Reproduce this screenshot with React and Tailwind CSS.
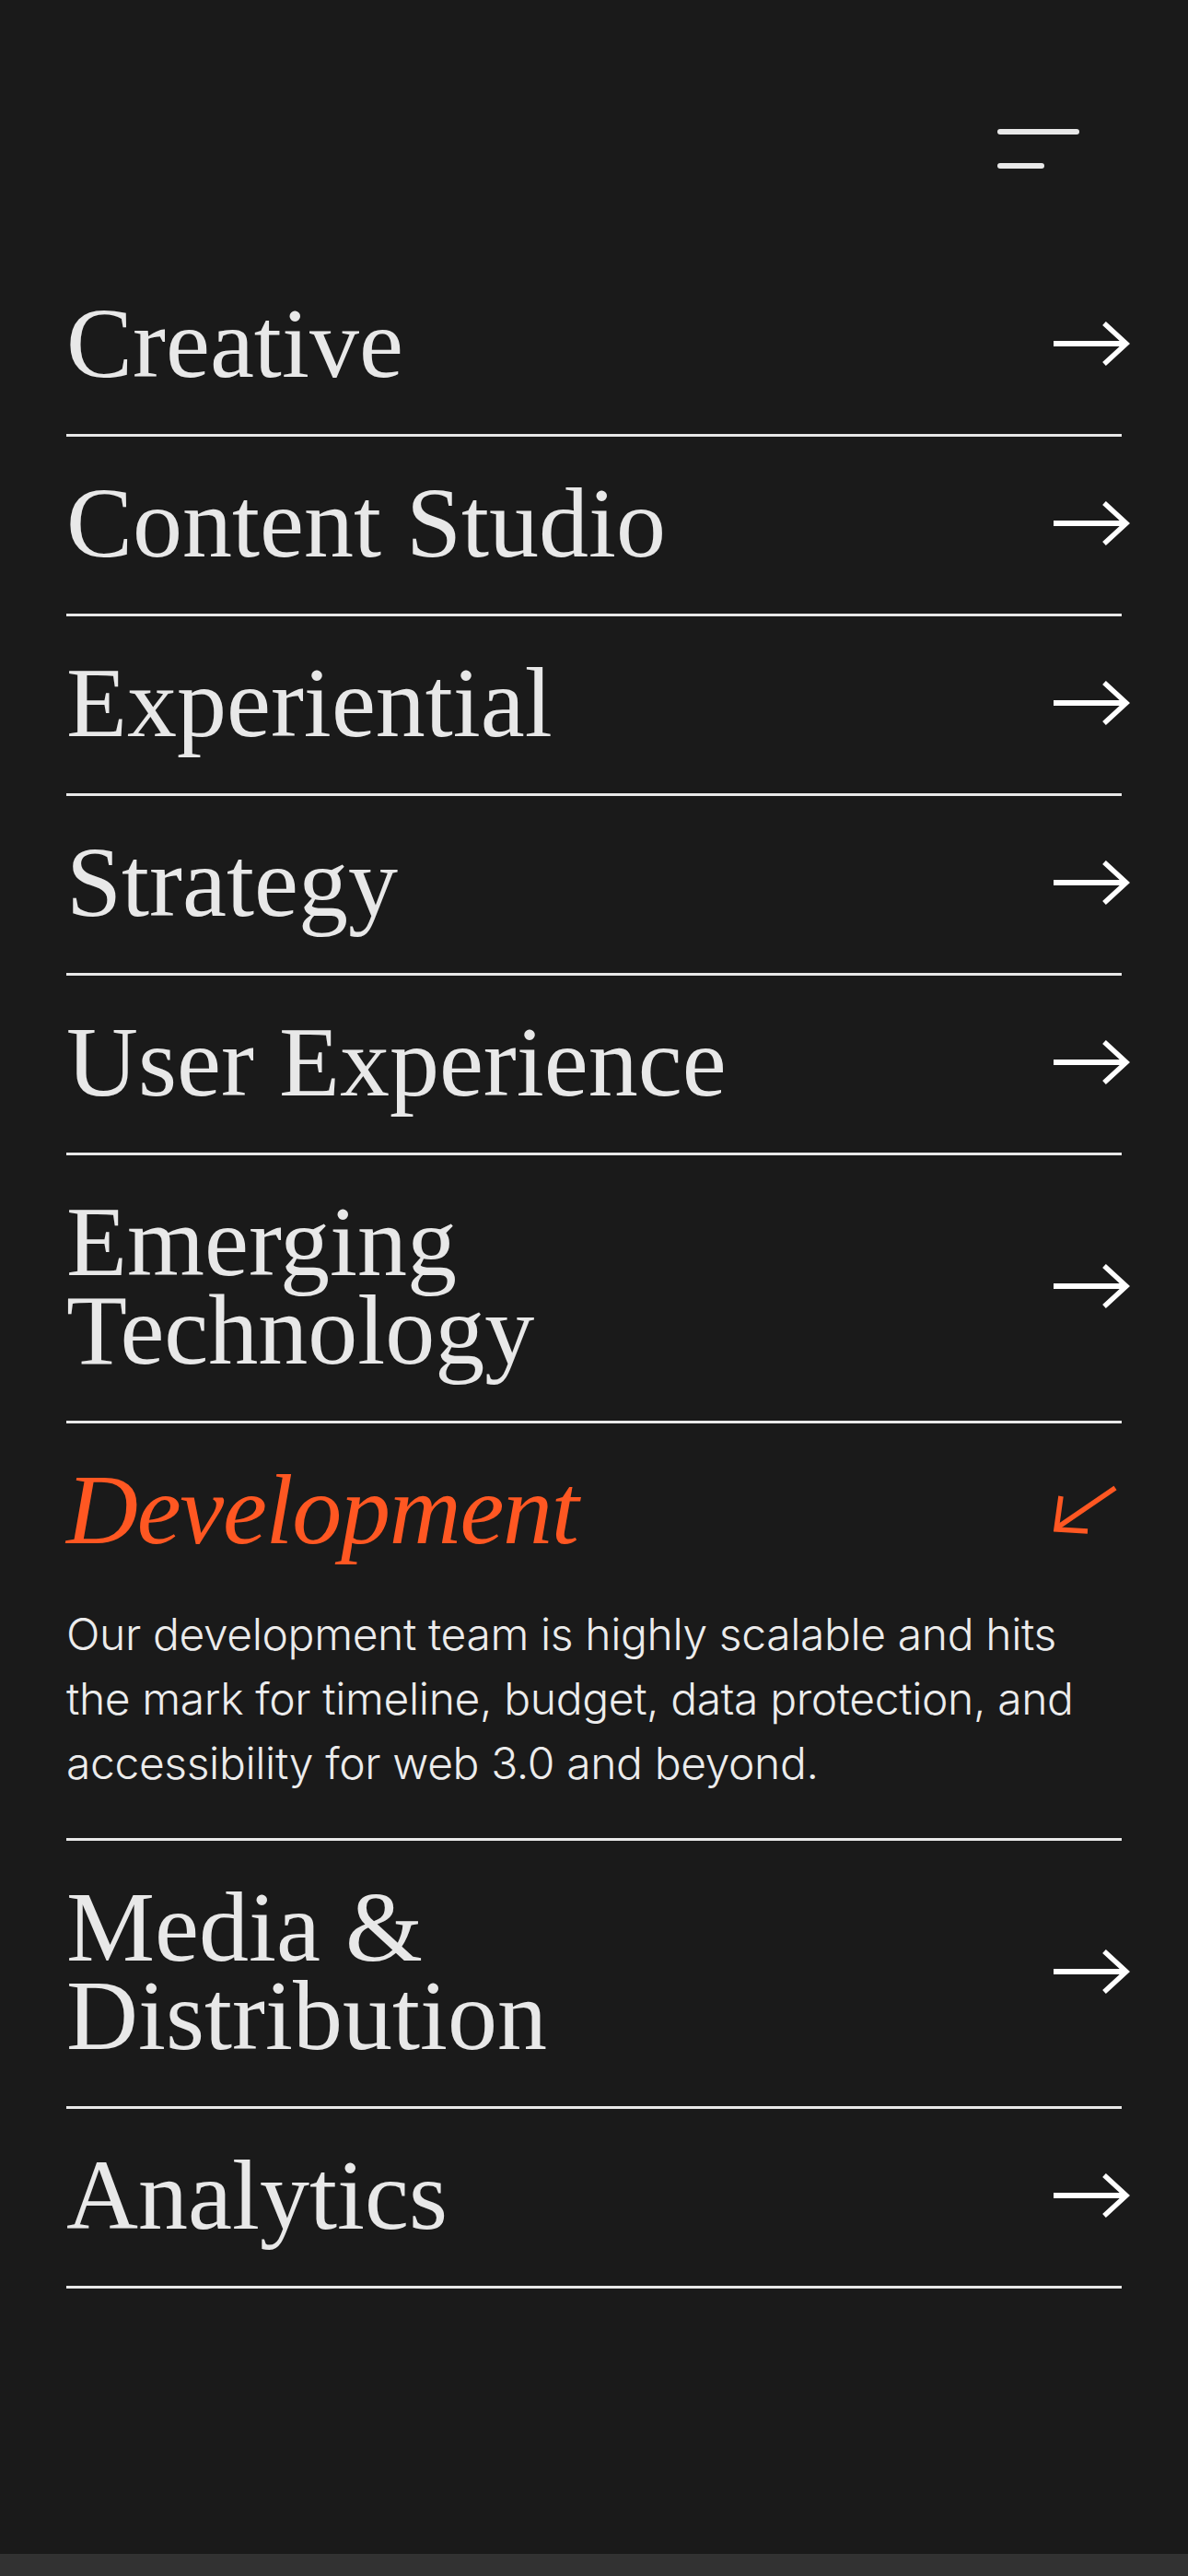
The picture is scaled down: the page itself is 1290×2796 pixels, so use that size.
import React from 'react';

const items = [
  { title: 'Creative' },
  { title: 'Content Studio' },
  { title: 'Experiential' },
  { title: 'Strategy' },
  { title: 'User Experience' },
  { title: ['Emerging', 'Technology'] },
  {
    title: 'Development',
    open: true,
    body: [
      'Our development team is highly scalable and hits',
      'the mark for timeline, budget, data protection, and',
      'accessibility for web 3.0 and beyond.',
    ],
  },
  { title: ['Media &', 'Distribution'] },
  { title: 'Analytics' },
];

function ArrowRight() {
  return (
    <svg width="84" height="48" viewBox="0 0 84 48" fill="none" className="shrink-0 -mr-[9px]">
      <path d="M1 24H80" stroke="#ffffff" strokeWidth="6" />
      <path d="M56 2L80 24L56 46" stroke="#ffffff" strokeWidth="5.5" />
    </svg>
  );
}

function ArrowDownLeft() {
  return (
    <svg width="70" height="54" viewBox="0 0 70 54" fill="none" className="shrink-0 mr-[4px]">
      <path d="M67 3L4 46" stroke="#ff5722" strokeWidth="5.5" />
      <path d="M8 12L3 48L37 50" stroke="#ff5722" strokeWidth="5.5" />
    </svg>
  );
}

export default function App() {
  return (
    <div className="min-h-[2796px] flex flex-col bg-[#1a1a1a] text-[#e8e8e8]">
      <header className="h-[279px] flex justify-end pt-[140px] pr-[118px]">
        <button className="flex flex-col items-start gap-[31px] h-fit">
          <span className="block w-[89px] h-[6px] rounded-full bg-[#e8e8e8]" />
          <span className="block w-[51px] h-[6px] rounded-full bg-[#e8e8e8]" />
        </button>
      </header>

      <nav className="flex-1 px-[72px]">
        <ul>
          {items.map((it, i) => (
            <li key={i} className="border-b-[3px] border-[#e8e8e8] pt-[46px] pb-[50px]">
              <div className="flex items-center justify-between">
                <h2
                  className={
                    'text-[108px] leading-[96px] font-normal ' +
                    (it.open ? 'italic tracking-[-0.012em] text-[#ff5722]' : '')
                  }
                  style={{ fontFamily: '"Liberation Serif", "Times New Roman", serif' }}
                >
                  {Array.isArray(it.title)
                    ? it.title.map((t, j) => <span key={j} className="block">{t}</span>)
                    : it.title}
                </h2>
                {it.open ? <ArrowDownLeft /> : <ArrowRight />}
              </div>
              {it.body && (
                <p
                  className="mt-[52px] mb-[-4px] text-[48px] leading-[70px] font-light tracking-[-0.008em] text-[#ececec]"
                  style={{ fontFamily: 'Inter, Roboto, "Liberation Sans", sans-serif' }}
                >
                  {it.body.map((line, j) => (
                    <span key={j} className="block whitespace-nowrap">{line}</span>
                  ))}
                </p>
              )}
            </li>
          ))}
        </ul>
      </nav>

      <div className="h-[24px] bg-[#323232]" />
    </div>
  );
}
